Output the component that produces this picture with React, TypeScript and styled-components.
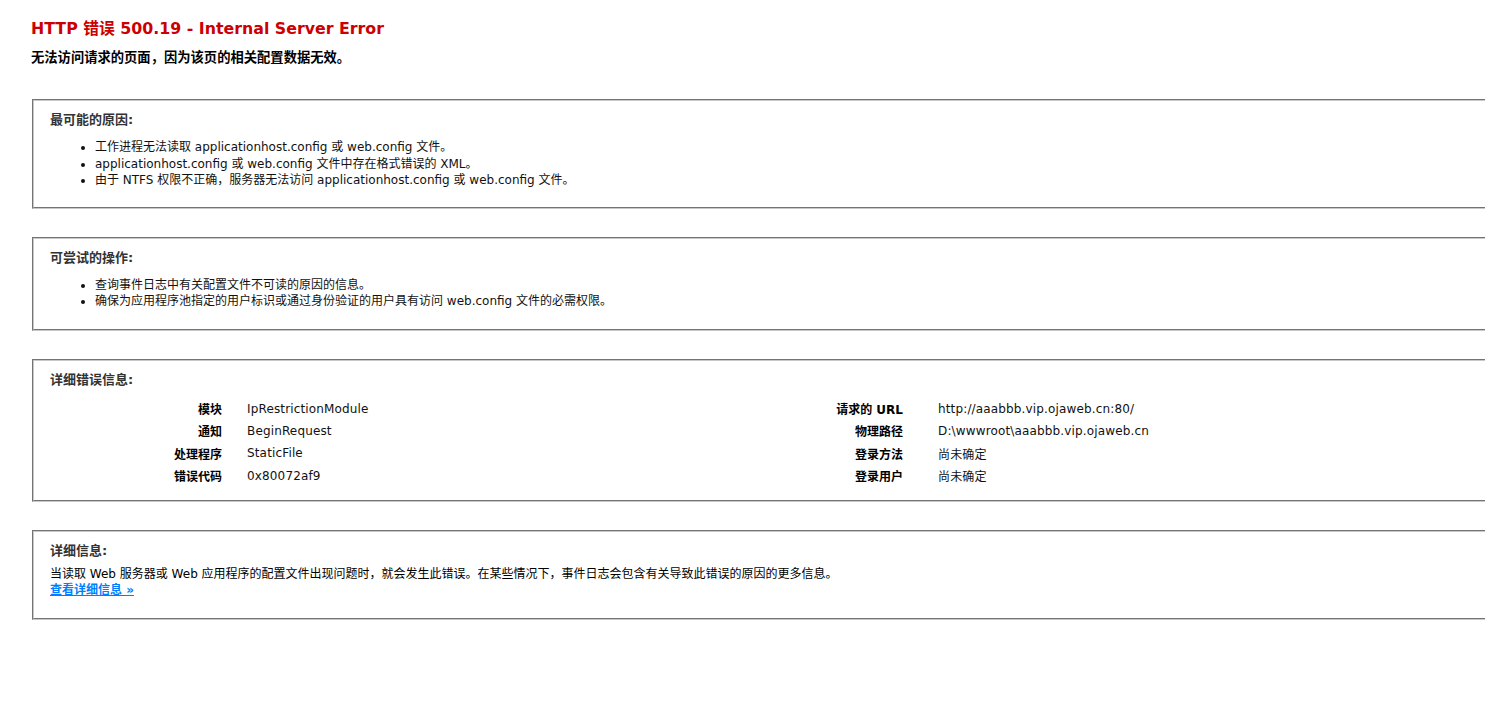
import styled, { createGlobalStyle } from 'styled-components'

const GlobalStyle = createGlobalStyle`
  html, body {
    margin: 0;
    padding: 0;
    background: #ffffff;
    overflow: hidden;
  }
  body {
    font-family: 'DejaVu Sans', Verdana, 'Noto Sans CJK SC', sans-serif;
    font-size: 12px;
    color: #000000;
  }
`

const Page = styled.div`
  padding: 18px 0 0 31px;
  overflow: hidden;
`

const Title = styled.h3`
  margin: 0;
  font-size: 15.8px;
  line-height: 22px;
  font-weight: bold;
  color: #cc0000;
`

const Subtitle = styled.h4`
  margin: 9px 0 0 0;
  font-size: 13.3px;
  line-height: 18px;
  font-weight: bold;
`

const Box = styled.section<{ $pb: number }>`
  width: calc(100% + 40px);
  margin: 28px 0 0 1px;
  border: 2px groove #c8c8c8;
  padding: 10px 16px ${p => p.$pb}px 16px;
  &:first-of-type {
    margin-top: 32px;
  }
`

const Legend = styled.div`
  font-size: 13px;
  font-weight: bold;
  color: #333333;
  line-height: 18px;
`

const List = styled.ul`
  margin: 10px 0 0 0;
  padding-left: 45px;
  li {
    line-height: 16.5px;
    color: #111111;
  }
`

const Details = styled.div`
  display: flex;
  margin-top: 9px;
`

const DetailColumn = styled.div<{ $width: number; $label: number; $gap: number }>`
  width: ${p => p.$width}px;
  display: grid;
  grid-template-columns: ${p => p.$label}px 1fr;
  column-gap: ${p => p.$gap}px;
  grid-auto-rows: 22.3px;
  align-items: center;
`

const Label = styled.div`
  text-align: right;
  font-weight: bold;
`

const Value = styled.div`
  color: #111111;
  white-space: nowrap;
  letter-spacing: 0.15px;
`

const Text = styled.p`
  margin: 6px 0 0 0;
  line-height: 16px;
`

const MoreLink = styled.a`
  display: inline-block;
  line-height: 16px;
  color: #007eff;
  font-weight: bold;
  text-decoration: underline;
`

const leftRows = [
  ['模块', 'IpRestrictionModule'],
  ['通知', 'BeginRequest'],
  ['处理程序', 'StaticFile'],
  ['错误代码', '0x80072af9'],
]

const rightRows = [
  ['请求的 URL', 'http://aaabbb.vip.ojaweb.cn:80/'],
  ['物理路径', 'D:\\wwwroot\\aaabbb.vip.ojaweb.cn'],
  ['登录方法', '尚未确定'],
  ['登录用户', '尚未确定'],
]

const App = () => {
  return (
    <>
      <GlobalStyle />
      <Page>
        <Title>HTTP 错误 500.19 - Internal Server Error</Title>
        <Subtitle>无法访问请求的页面，因为该页的相关配置数据无效。</Subtitle>

        <Box $pb={18}>
          <Legend>最可能的原因:</Legend>
          <List>
            <li>工作进程无法读取 applicationhost.config 或 web.config 文件。</li>
            <li>applicationhost.config 或 web.config 文件中存在格式错误的 XML。</li>
            <li>由于 NTFS 权限不正确，服务器无法访问 applicationhost.config 或 web.config 文件。</li>
          </List>
        </Box>

        <Box $pb={19}>
          <Legend>可尝试的操作:</Legend>
          <List>
            <li>查询事件日志中有关配置文件不可读的原因的信息。</li>
            <li>确保为应用程序池指定的用户标识或通过身份验证的用户具有访问 web.config 文件的必需权限。</li>
          </List>
        </Box>

        <Box $pb={13}>
          <Legend>详细错误信息:</Legend>
          <Details>
            <DetailColumn $width={730} $label={172} $gap={25}>
              {leftRows.map(([k, v]) => (
                <>
                  <Label key={k}>{k}</Label>
                  <Value key={k + 'v'}>{v}</Value>
                </>
              ))}
            </DetailColumn>
            <DetailColumn $width={600} $label={123} $gap={35}>
              {rightRows.map(([k, v]) => (
                <>
                  <Label key={k}>{k}</Label>
                  <Value key={k + 'v'}>{v}</Value>
                </>
              ))}
            </DetailColumn>
          </Details>
        </Box>

        <Box $pb={20}>
          <Legend>详细信息:</Legend>
          <Text>
            当读取 Web 服务器或 Web 应用程序的配置文件出现问题时，就会发生此错误。在某些情况下，事件日志会包含有关导致此错误的原因的更多信息。
          </Text>
          <MoreLink href="#">查看详细信息 »</MoreLink>
        </Box>
      </Page>
    </>
  )
}

export default App
